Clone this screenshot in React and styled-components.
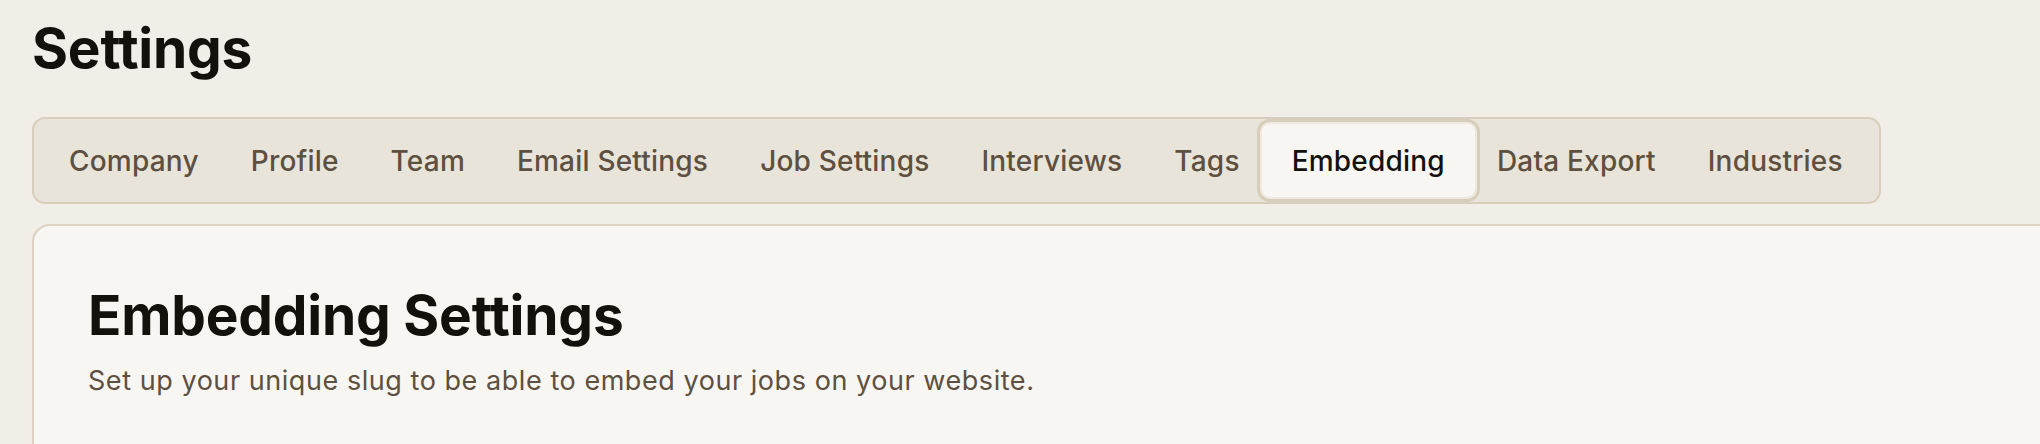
import React from 'react';
import styled, { createGlobalStyle } from 'styled-components';

const GlobalStyle = createGlobalStyle`
  html, body {
    margin: 0;
    padding: 0;
    background: #f1ede7;
    overflow: hidden;
  }
  body {
    font-family: Inter, "Noto Sans", "Liberation Sans", sans-serif;
  }
`

const tabs = [
  'Company',
  'Profile',
  'Team',
  'Email Settings',
  'Job Settings',
  'Interviews',
  'Tags',
  'Embedding',
  'Data Export',
  'Industries',
];

function App() {
  const active = 'Embedding';
  return (
    <>
      <GlobalStyle />
      <Page>
        <Title>Settings</Title>
        <TabBar>
          {tabs.map((t) => (
            <Tab key={t} $active={t === active}>{t}</Tab>
          ))}
        </TabBar>
        <Card>
          <CardTitle>Embedding Settings</CardTitle>
          <CardText>Set up your unique slug to be able to embed your jobs on your website.</CardText>
        </Card>
      </Page>
    </>
  );
}

export default App;

const Page = styled.main`
  display: flex;
  flex-direction: column;
  align-items: flex-start;
  padding: 15px 0 0 32px;
  min-height: 100vh;
  box-sizing: border-box;
`

const Title = styled.h1`
  margin: 0;
  font-size: 55px;
  line-height: 66px;
  font-weight: 700;
  color: #14110d;
  letter-spacing: -0.2px;
`

const TabBar = styled.nav`
  display: inline-flex;
  align-items: stretch;
  margin-top: 36px;
  height: 87px;
  box-sizing: border-box;
  padding: 0 10px 0 9px;
  background: #e8e4d9;
  border: 2px solid #d8cebd;
  border-radius: 13px;
`

const Tab = styled.div`
  display: flex;
  align-items: center;
  box-sizing: border-box;
  padding: ${(p) => (p.$active ? '0 32px' : '0 26px')};
  margin: ${(p) => (p.$active ? '0 -9px' : '0')};
  font-size: 28px;
  font-weight: 500;
  letter-spacing: 0.2px;
  white-space: nowrap;
  color: ${(p) => (p.$active ? '#14110d' : '#5e5040')};
  background: ${(p) => (p.$active ? '#f8f6f2' : 'transparent')};
  border: ${(p) => (p.$active ? '3px solid #d7cdbc' : 'none')};
  box-shadow: ${(p) => (p.$active ? 'inset 0 0 0 2px #eee8de' : 'none')};
  border-radius: 13px;
  position: relative;
`

const Card = styled.section`
  margin-top: 20px;
  width: calc(100vw + 40px);
  min-height: 400px;
  box-sizing: border-box;
  padding: 56px 54px;
  background: #f7f6f2;
  border: 2px solid #dad1c1;
  border-radius: 18px;
`

const CardTitle = styled.h2`
  margin: 0;
  font-size: 55px;
  line-height: 66px;
  font-weight: 700;
  color: #14110d;
  letter-spacing: -0.2px;
`

const CardText = styled.p`
  margin: 13px 0 0;
  font-size: 27px;
  line-height: 40px;
  font-weight: 400;
  letter-spacing: 0.55px;
  color: #5e5040;
`
